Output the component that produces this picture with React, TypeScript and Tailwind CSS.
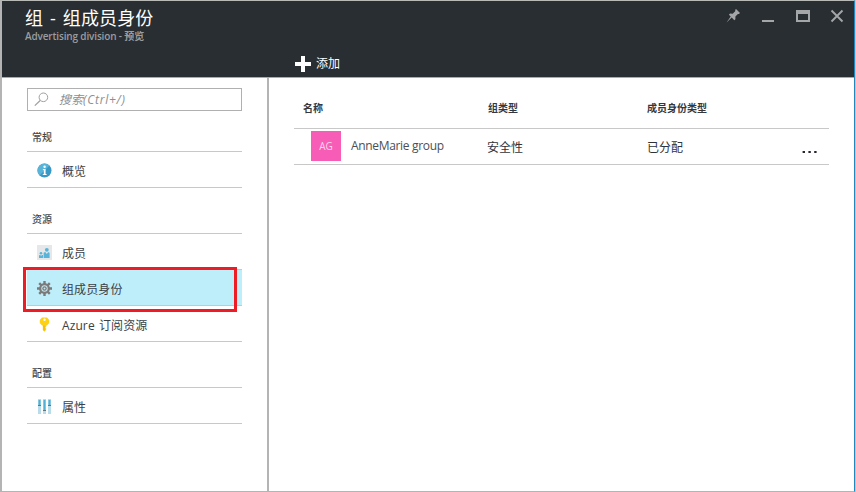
import type { ReactNode } from "react";

const INFO = (
  <svg width="15" height="15" viewBox="0 0 15 15">
    <circle cx="7.5" cy="7.5" r="7" fill="#3999c6" />
    <path d="M2.5 12.5A7 7 0 0 1 12.5 2.5Z" fill="#59b4d9" />
    <circle cx="7.6" cy="3.8" r="1.2" fill="#fff" />
    <path d="M5.9 6h2.7v5h1v1H5.8v-1h1V7h-.9z" fill="#fff" />
  </svg>
);

const MEMBERS = (
  <svg width="15" height="15" viewBox="0 0 15 15">
    <path d="M0 0h15v15H0z" fill="#e6e7e8" />
    <circle cx="9.8" cy="4.8" r="1.9" fill="#59b4d9" />
    <path d="M6.6 13V8.2q0-1 1-1h1l1.2 1.7L11 7.2h.6q1 0 1 1V13z" fill="#59b4d9" />
    <circle cx="4" cy="8.2" r="1.3" fill="#59b4d9" />
    <path d="M2 13v-2.2q0-.8.8-.8h.5l.8 1 .8-1H6v3z" fill="#59b4d9" />
  </svg>
);

const GEAR = (
  <svg width="15" height="15" viewBox="0 0 15 15">
    <g fill="#7a7a7a">
      <path d="M6.3 0h2.4v15H6.3zM0 6.3h15v2.4H0z" />
      <path d="M6.3 0h2.4v15H6.3zM0 6.3h15v2.4H0z" transform="rotate(45 7.5 7.5)" />
      <circle cx="7.5" cy="7.5" r="5.4" />
    </g>
    <circle cx="7.5" cy="7.5" r="3.2" fill="#c8e6ee" />
    <circle cx="7.5" cy="7.5" r="2.2" fill="#7a7a7a" />
    <circle cx="7.5" cy="7.5" r="1" fill="#c8e6ee" />
  </svg>
);

const KEY = (
  <svg width="15" height="15" viewBox="0 0 15 15">
    <path d="M5 .4h5L12.2 3v3L10 8.6H9.2V10l-1 .8 1 .8v1L7.6 14.8 5.8 13V8.6H5L2.8 6V3z" fill="#fcd116" />
    <circle cx="7.5" cy="2.8" r="1.2" fill="#fff" />
    <path d="M6.6 8.5h.8v5h-.8z" fill="#e8a800" />
  </svg>
);

const SLIDERS = (
  <svg width="15" height="15" viewBox="0 0 15 15">
    <path d="M1 0h3v15H1zM6 0h3v15H6zM11 0h3v15h-3z" fill="#b8dcea" />
    <path d="M1.5 1h2v5h-2zM6.5 1h2v10h-2zM11.5 1h2v5h-2z" fill="#4eb0d6" />
    <path d="M1 6h3v1H1zM6 11h3v1H6zM11 6h3v1h-3z" fill="#66757c" />
  </svg>
);

function Section({ title, className, children }: { title: string; className: string; children: ReactNode }) {
  return (
    <section>
      <h2 className={`border-b border-[#c8c8c8] pl-[5px] text-[10px] leading-[15px] font-medium text-[#44494f] ${className}`}>{title}</h2>
      {children}
    </section>
  );
}

function Item({ icon, label, active }: { icon: ReactNode; label: string; active?: boolean }) {
  return (
    <div className={`relative flex h-9 items-center border-b border-[#c8c8c8] pl-2.5 ${active ? "bg-[#bfeefb]" : ""}`}>
      <span className="mt-px">{icon}</span>
      <span className="mt-1 ml-2.5 text-[12px] leading-4 tracking-[0.1px] text-[#3c4045] [word-spacing:1px]">{label}</span>
      {active && <div className="pointer-events-none absolute -top-[3px] -left-1 z-10 h-[45px] w-[214px] border-[3px] border-[#ee1c24]" />}
    </div>
  );
}

function WindowButtons() {
  return (
    <svg className="absolute top-[7px] right-[9px]" width="119" height="18" viewBox="0 0 119 18" fill="#a4a6a8">
      <path d="M10 1l4 4-1.1 1.1-1-.2L9.4 8.5v2.7l-1.1 1-2.6-2.6L.6 14.4 4.7 8.6 2.9 6.7 4 5.6l2.7.1 2.7-2.6-.3-1z" />
      <path d="M36 12h12v2H36z" />
      <path fillRule="evenodd" d="M70 2h14v12H70zM72 6v6h10V6z" />
      <path d="M105.5 2.5l11 11m0-11l-11 11" fill="none" stroke="#a4a6a8" strokeWidth="1.9" />
    </svg>
  );
}

export default function App() {
  return (
    <div className="h-[492px] w-[856px] border-r border-[#c4c4c4] bg-white font-['Open_Sans','Noto_Sans_CJK_SC',sans-serif]">
      <div className="flex h-full flex-col border-t border-r border-b border-l-2 border-t-[#b8bab8] border-r-[#2785b8] border-b-[#b4b4b4] border-l-[#b4b4b4]">
        <header className="relative h-[77px] shrink-0 border-b border-[#a8aaac] bg-[#292e32] text-white">
          <div className="pt-[5px] pl-[23px]">
            <h1 className="text-[18px] leading-6 tracking-[0.15px] [word-spacing:2px]">组 - 组成员身份</h1>
            <p className="text-[10px] leading-3 font-semibold tracking-[-0.15px] text-[#9a9da0]">Advertising division - 预览</p>
          </div>
          <div className="mt-3 flex h-5 items-center pl-[293px]">
            <svg width="16" height="16" viewBox="0 0 16 16">
              <path d="M6 0h4v6h6v4h-6v6H6v-6H0V6h6z" fill="#fff" />
            </svg>
            <span className="ml-[5px] text-[12px] leading-4">添加</span>
          </div>
          <WindowButtons />
        </header>
        <div className="flex min-h-0 flex-1">
          <aside className="w-[267px] shrink-0 border-r-2 border-[#b4b4b4] pt-2.5 pr-[25px] pl-[25px]">
            <div className="flex h-[23px] items-center border border-[#b0b0b0] pl-[6px]">
              <svg width="15" height="15" viewBox="0 0 15 15" fill="none" stroke="#a0a0a0">
                <circle cx="9.4" cy="5.3" r="4.3" />
                <path d="M6.2 8.5L.8 13.6" strokeWidth="1.3" />
              </svg>
              <span className="ml-[10px] text-[12px] leading-4 text-[#8c8f92] italic">
                搜索<span className="tracking-[0.75px]">(Ctrl+/)</span>
              </span>
            </div>
            <Section title="常规" className="pt-[19px] pb-[6px]">
              <Item icon={INFO} label="概览" />
            </Section>
            <Section title="资源" className="pt-[24px] pb-[6px]">
              <Item icon={MEMBERS} label="成员" />
              <Item icon={GEAR} label="组成员身份" active />
              <Item icon={KEY} label="Azure 订阅资源" />
            </Section>
            <Section title="配置" className="pt-[24px] pb-[6px]">
              <Item icon={SLIDERS} label="属性" />
            </Section>
          </aside>
          <main className="pt-5 pl-[25px]">
            <div className="grid h-[31px] w-[535px] grid-cols-[194px_159px_1fr] border-b border-[#c8c8c8] pt-[2px] text-[10px] leading-4 font-bold text-[#34383e]">
              <span className="pl-[9px]">名称</span>
              <span>组类型</span>
              <span>成员身份类型</span>
            </div>
            <div className="grid h-9 w-[535px] grid-cols-[193px_160px_154px_1fr] border-b border-[#c8c8c8] text-[12px] leading-4 text-[#30343a]">
              <div className="flex pl-[17px]">
                <span className="mt-[2px] flex h-[30px] w-[30px] items-center justify-center bg-[#f75db6] text-[10px] text-[#ffd5ed]">AG</span>
                <span className="mt-[9px] ml-[10px] tracking-[-0.33px] text-[#4a4f55]">AnneMarie group</span>
              </div>
              <span className="mt-[11px]">安全性</span>
              <span className="mt-[11px]">已分配</span>
              <svg className="mt-[21px]" width="18" height="4" viewBox="0 0 18 4" fill="#24282d">
                <path d="M1.6 1h2.4v2H1.6zM7.4 1h2.4v2H7.4zM13.2 1h2.4v2h-2.4z" />
              </svg>
            </div>
          </main>
        </div>
      </div>
    </div>
  );
}
